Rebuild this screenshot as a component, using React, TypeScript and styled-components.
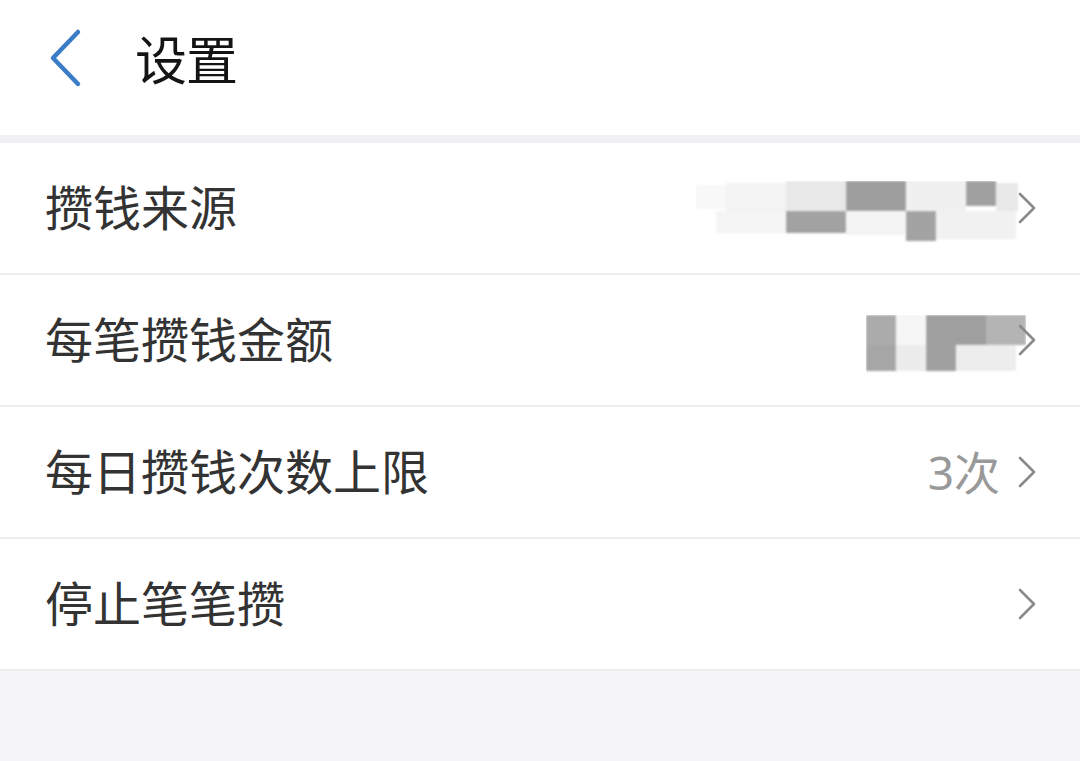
import styled, { createGlobalStyle } from 'styled-components';

const Global = createGlobalStyle`
    html, body {
        margin: 0;
        padding: 0;
        background: #f5f5f7;
        font-family: "Noto Sans CJK SC", "Noto Sans", sans-serif;
    }
`;

const Page = styled.div`
    width: 1080px;
    height: 761px;
    background: #f5f5f7;
    overflow: hidden;
`;

const Header = styled.div`
    height: 143px;
    background: #fff;
    display: flex;
    align-items: center;
    padding-left: 48px;
    box-sizing: border-box;
    border-bottom: 8px solid #f1f1f3;
`;

const Back = styled.div`
    width: 40px;
    height: 60px;
    display: flex;
    align-items: center;
    margin-right: 47px;
    margin-top: -20px;
`;

const Title = styled.div`
    font-size: 52px;
    color: #141414;
    margin-top: -20px;
    letter-spacing: -1px;
`;

const List = styled.div`
    background: #fff;
`;

const Row = styled.div`
    height: 130px;
    border-bottom: 2px solid #efeff1;
    display: flex;
    align-items: center;
    padding: 0 42px 0 45px;
    &:last-child {
        border-bottom: 2px solid #ececee;
    }
`;

const Label = styled.div`
    flex: 1;
    font-size: 48px;
    color: #333;
    margin-top: -7px;
`;

const Value = styled.div`
    font-size: 46px;
    color: #999;
    margin-right: 18px;
    margin-top: -5px;
    font-family: "Noto Sans", "Noto Sans CJK SC", sans-serif;
`;

const Chevron = () => (
    <svg width="20" height="32" viewBox="0 0 20 32">
        <polyline points="2,2 16,16 2,30" fill="none" stroke="#8a8a8a" strokeWidth="2.6" strokeLinecap="round" strokeLinejoin="round" />
    </svg>
);

interface MosaicProps {
    width: number
    height: number
    cells: [number, number, number, number, string][]
}

const Mosaic = (props: MosaicProps) => (
    <svg width={props.width} height={props.height} style={{ marginRight: -8, marginTop: 8 }}>
        <defs>
            <filter id="soft" x="-10%" y="-10%" width="120%" height="120%">
                <feGaussianBlur stdDeviation="1.2" />
            </filter>
        </defs>
        <g filter="url(#soft)">
            {props.cells.map((c, i) => (
                <rect key={i} x={c[0]} y={c[1]} width={c[2]} height={c[3]} fill={c[4]} />
            ))}
        </g>
    </svg>
);

// row 1 blurred value, origin at x 690, y 183
const sourceCells: [number, number, number, number, string][] = [
    [0, 4, 30, 24, '#f8f8f8'],
    [30, 2, 60, 30, '#f3f3f3'],
    [90, 0, 60, 30, '#e8e8e8'],
    [150, 0, 60, 30, '#9e9e9e'],
    [210, 0, 60, 30, '#f0f0f0'],
    [270, 0, 30, 25, '#a0a0a0'],
    [300, 2, 22, 28, '#e8e8e8'],
    [20, 30, 70, 22, '#f5f5f5'],
    [90, 30, 60, 22, '#a2a2a2'],
    [150, 30, 60, 24, '#f3f3f3'],
    [210, 30, 30, 30, '#a3a3a3'],
    [240, 30, 80, 28, '#f1f1f1'],
];

// row 2 blurred value, origin at x 870, y 304
const amountCells: [number, number, number, number, string][] = [
    [0, 0, 30, 30, '#ababab'],
    [30, 0, 30, 30, '#f6f6f6'],
    [60, 0, 60, 30, '#9f9f9f'],
    [120, 0, 40, 30, '#b4b4b4'],
    [0, 30, 30, 26, '#a6a6a6'],
    [30, 30, 30, 26, '#ececec'],
    [60, 30, 30, 26, '#a0a0a0'],
    [90, 30, 60, 26, '#ededed'],
];

interface ItemProps {
    label: string
    value?: string
    masked?: 'source' | 'amount'
}

const Item = (props: ItemProps) => (
    <Row>
        <Label>{props.label}</Label>
        {props.masked === 'source' ? (
            <Mosaic width={330} height={62} cells={sourceCells} />
        ) : null}
        {props.masked === 'amount' ? (
            <Mosaic width={160} height={58} cells={amountCells} />
        ) : null}
        {props.value ? <Value>{props.value}</Value> : null}
        <Chevron />
    </Row>
);

export default function App() {
    return (
        <Page>
            <Global />
            <Header>
                <Back>
                    <svg width="36" height="60" viewBox="0 0 36 60">
                        <polyline points="30,4 5,30 30,56" fill="none" stroke="#3b7cc6" strokeWidth="4.5" strokeLinecap="round" strokeLinejoin="round" />
                    </svg>
                </Back>
                <Title>设置</Title>
            </Header>
            <List>
                <Item label="攒钱来源" masked="source" />
                <Item label="每笔攒钱金额" masked="amount" />
                <Item label="每日攒钱次数上限" value="3次" />
                <Item label="停止笔笔攒" />
            </List>
        </Page>
    );
}
